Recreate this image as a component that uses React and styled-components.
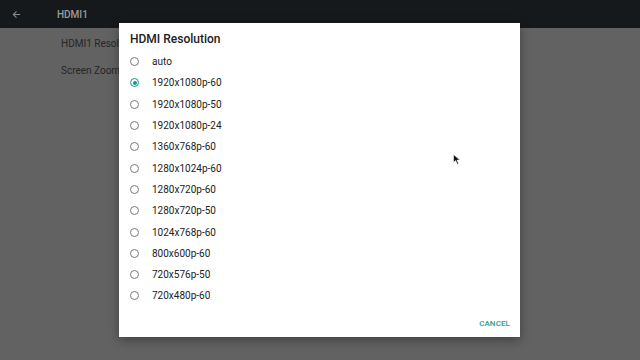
import styled, { createGlobalStyle } from "styled-components";

const GlobalStyle = createGlobalStyle`
  html, body {
    margin: 0;
    padding: 0;
    width: 640px;
    height: 360px;
    overflow: hidden;
    background: #626262;
    font-family: Roboto, "Liberation Sans", sans-serif;
  }
`;

const options = [
  "auto",
  "1920x1080p-60",
  "1920x1080p-50",
  "1920x1080p-24",
  "1360x768p-60",
  "1280x1024p-60",
  "1280x720p-60",
  "1280x720p-50",
  "1024x768p-60",
  "800x600p-60",
  "720x576p-50",
  "720x480p-60",
];

export default function App() {
  const selected = 1;

  return (
    <>
      <GlobalStyle />
      <Screen>
        <TopBar>
          <BackArrow viewBox="0 0 10 10">
            <path d="M9 5H1.6M5 1.5L1.5 5L5 8.5" fill="none" stroke="#8a8a8a" strokeWidth="1.2" />
          </BackArrow>
          <BarTitle>HDMI1</BarTitle>
        </TopBar>
        <Settings>
          <SettingRow>HDMI1 Resolution</SettingRow>
          <SettingRow>Screen Zoom</SettingRow>
        </Settings>

        <Dialog>
          <DialogTitle>HDMI Resolution</DialogTitle>
          <OptionList>
            {options.map((label, i) => (
              <Option key={label}>
                <Radio checked={i === selected} />
                <span>{label}</span>
              </Option>
            ))}
          </OptionList>
          <Footer>
            <CancelButton>CANCEL</CancelButton>
          </Footer>
        </Dialog>

        <Cursor viewBox="0 0 8 11">
          <path d="M0.5 0.5V8.5L2.6 6.6L4.2 10.2L5.5 9.6L4 6.1H7Z" fill="#111" stroke="#fff" strokeWidth="0.6" />
        </Cursor>
      </Screen>
    </>
  );
}

const Screen = styled.div`
  position: relative;
  width: 640px;
  height: 360px;
  background: #626262;
  overflow: hidden;
`;

const TopBar = styled.div`
  height: 28px;
  background: #16191b;
  display: flex;
  align-items: center;
`;

const BackArrow = styled.svg`
  width: 9px;
  height: 9px;
  margin-left: 12px;
`;

const BarTitle = styled.div`
  margin-left: 36px;
  color: #9c9c9c;
  font-size: 10px;
  font-weight: 500;
`;

const Settings = styled.div`
  width: 119px;
  overflow: hidden;
  display: flex;
  flex-direction: column;
  box-sizing: border-box;
  padding: 8px 0 0 61px;
`;

const SettingRow = styled.div`
  height: 27px;
  line-height: 15px;
  white-space: nowrap;
  color: #262626;
  font-size: 10px;
`;

const Dialog = styled.div`
  position: absolute;
  left: 119px;
  top: 23px;
  width: 401px;
  height: 314px;
  background: #fff;
  box-shadow: 0 3px 10px rgba(0, 0, 0, 0.35);
  display: flex;
  flex-direction: column;
  box-sizing: border-box;
  padding-top: 8px;
`;

const DialogTitle = styled.div`
  height: 16px;
  line-height: 16px;
  padding-left: 11px;
  margin-bottom: 4px;
  font-size: 12px;
  font-weight: 500;
  color: #212121;
`;

const OptionList = styled.div`
  display: flex;
  flex-direction: column;
`;

const Option = styled.div`
  height: 21.3px;
  display: flex;
  align-items: center;
  padding-left: 11px;
  font-size: 10px;
  color: #222;
`;

const Radio = styled.div`
  width: 9px;
  height: 9px;
  box-sizing: border-box;
  border-radius: 50%;
  border: 1.3px solid ${({ checked }) => (checked ? "#0f9d8c" : "#7a7a7a")};
  margin-right: 13px;
  display: flex;
  align-items: center;
  justify-content: center;

  &::after {
    content: "";
    width: 4px;
    height: 4px;
    border-radius: 50%;
    background: ${({ checked }) => (checked ? "#0f9d8c" : "transparent")};
  }
`;

const Footer = styled.div`
  margin-top: auto;
  height: 28px;
  display: flex;
  justify-content: flex-end;
  align-items: center;
  padding-right: 10px;
`;

const CancelButton = styled.div`
  font-size: 8px;
  font-weight: 500;
  color: #1fa092;
  letter-spacing: 0.1px;
`;

const Cursor = styled.svg`
  position: absolute;
  left: 453px;
  top: 154px;
  width: 8px;
  height: 11px;
`;
